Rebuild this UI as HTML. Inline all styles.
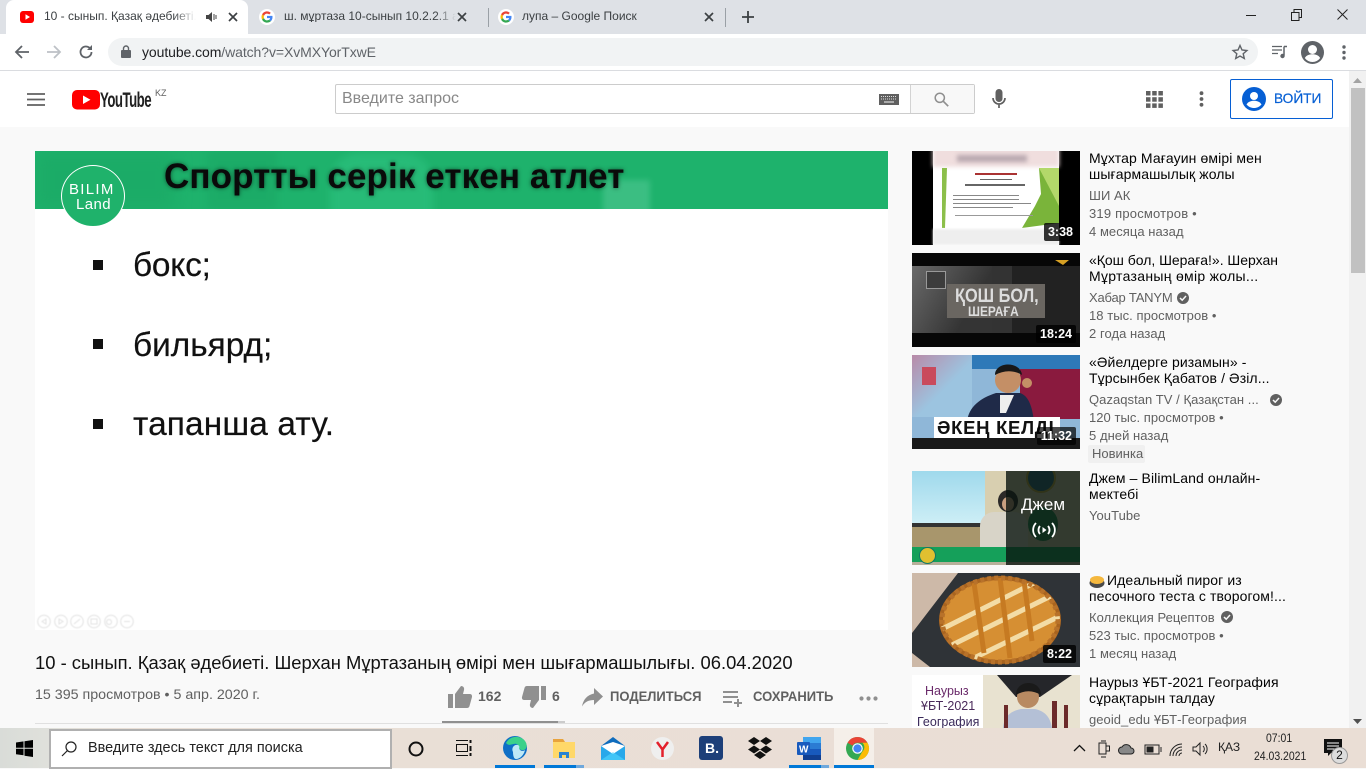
<!DOCTYPE html>
<html lang="ru"><head><meta charset="utf-8"><title>10 - сынып. Қазақ әдебиеті</title>
<style>
html,body{margin:0;padding:0;width:1366px;height:768px;overflow:hidden;background:#f9f9f9;font-family:"Liberation Sans","Noto Sans CJK SC",sans-serif}
.a{position:absolute}
.t{position:absolute;white-space:nowrap;line-height:1}
svg{position:absolute;overflow:visible}
.tt{font-size:14px;color:#030303;left:1089px;letter-spacing:.1px}
.m{font-size:13px;color:#606060;left:1089px;letter-spacing:.05px}
.d{position:absolute;background:rgba(0,0,0,.8);color:#fff;font-size:12.5px;font-weight:bold;line-height:18px;height:18px;padding:0 4px;border-radius:2px;white-space:nowrap}
.th{position:absolute;left:912px;width:168px;height:94px;overflow:hidden}
.blur{filter:blur(.6px)}
</style></head><body>

<!-- tab strip -->
<div class="a" style="left:0;top:0;width:1366px;height:34px;background:#dee1e6"></div>
<div class="a" style="left:6px;top:0;width:242px;height:34px;background:#fff;border-radius:8px 8px 0 0"></div>
<svg style="left:20px;top:9px" width="16" height="16"><rect x="0" y="2" width="14" height="12" rx="3" fill="#f00"/><path d="M5.500 5.300v5.400l4.500-2.700z" fill="#fff"/></svg>
<div class="t" style="left:44px;top:10px;font-size:12px;color:#3c4043;width:152px;overflow:hidden;-webkit-mask-image:linear-gradient(90deg,#000 85%,transparent)">10 - сынып. Қазақ әдебиеті.</div>
<svg style="left:206px;top:10px" width="12" height="14"><path d="M0 5h2.500L6 2v10L2.500 9H0z" fill="#444"/><path d="M8 4v6M10 5v4" stroke="#666" stroke-width="1.200"/></svg>
<svg style="left:228px;top:12px" width="10" height="10"><path d="M1 1l8 8M9 1l-8 8" stroke="#3c4043" stroke-width="1.700"/></svg>
<!-- G icons -->
<svg style="left:259px;top:9px" width="16" height="16" viewBox="0 0 16 16"><circle cx="8" cy="8" r="8" fill="#fff"/><path d="M8 4.600c1 0 1.700.4 2.200.9l1.600-1.600C10.800 3 9.500 2.400 8 2.400 5.800 2.400 4 3.600 3.100 5.400l1.900 1.500C5.400 5.600 6.600 4.600 8 4.600z" fill="#ea4335"/><path d="M13.500 8.100c0-.5 0-.8-.1-1.200H8v2.200h3.100c-.1.700-.5 1.300-1.100 1.700l1.800 1.400c1.100-1 1.700-2.400 1.700-4.100z" fill="#4285f4"/><path d="M5 9.100c-.1-.3-.2-.7-.2-1.100s.1-.8.2-1.100L3.100 5.400C2.700 6.200 2.500 7.100 2.500 8s.2 1.800.6 2.600z" fill="#fbbc05"/><path d="M8 13.600c1.500 0 2.800-.5 3.800-1.400L10 10.800c-.5.300-1.200.6-2 .6-1.400 0-2.600-1-3-2.300l-1.900 1.500C4 12.400 5.800 13.600 8 13.600z" fill="#34a853"/></svg>
<div class="t" style="left:284px;top:10px;font-size:12px;color:#3c4043;width:172px;overflow:hidden;-webkit-mask-image:linear-gradient(90deg,#000 88%,transparent)">ш. мұртаза 10-сынып 10.2.2.1 ав</div>
<svg style="left:457px;top:12px" width="10" height="10"><path d="M1 1l8 8M9 1l-8 8" stroke="#3c4043" stroke-width="1.700"/></svg>
<div class="a" style="left:488px;top:8px;width:1px;height:19px;background:#9aa0a6"></div>
<svg style="left:498px;top:9px" width="16" height="16" viewBox="0 0 16 16"><circle cx="8" cy="8" r="8" fill="#fff"/><path d="M8 4.600c1 0 1.700.4 2.200.9l1.600-1.600C10.800 3 9.500 2.400 8 2.400 5.800 2.400 4 3.600 3.100 5.400l1.900 1.500C5.400 5.600 6.600 4.600 8 4.600z" fill="#ea4335"/><path d="M13.500 8.100c0-.5 0-.8-.1-1.200H8v2.200h3.100c-.1.700-.5 1.300-1.100 1.700l1.800 1.400c1.100-1 1.700-2.400 1.700-4.100z" fill="#4285f4"/><path d="M5 9.100c-.1-.3-.2-.7-.2-1.100s.1-.8.2-1.100L3.100 5.400C2.700 6.200 2.500 7.100 2.500 8s.2 1.800.6 2.600z" fill="#fbbc05"/><path d="M8 13.600c1.500 0 2.800-.5 3.800-1.400L10 10.800c-.5.300-1.200.6-2 .6-1.400 0-2.600-1-3-2.300l-1.900 1.500C4 12.400 5.800 13.600 8 13.600z" fill="#34a853"/></svg>
<div class="t" style="left:522px;top:10px;font-size:12px;color:#3c4043">лупа – Google Поиск</div>
<svg style="left:704px;top:12px" width="10" height="10"><path d="M1 1l8 8M9 1l-8 8" stroke="#3c4043" stroke-width="1.700"/></svg>
<div class="a" style="left:725px;top:8px;width:1px;height:19px;background:#9aa0a6"></div>
<svg style="left:741px;top:10px" width="14" height="14"><path d="M7 1v12M1 7h12" stroke="#3c4043" stroke-width="1.800"/></svg>
<!-- window controls -->
<div class="a" style="left:1246px;top:15px;width:10px;height:1px;background:#222"></div>
<svg style="left:1291px;top:9px" width="12" height="12"><path d="M.5 3.500h7.500v8H.5zM3 3.500V.5h7.500v8H8" fill="none" stroke="#222"/></svg>
<svg style="left:1337px;top:9px" width="12" height="12"><path d="M.5.5l10 10M10.500.5l-10 10" stroke="#222"/></svg>

<!-- toolbar -->
<div class="a" style="left:0;top:34px;width:1366px;height:36px;background:#fff"></div>
<div class="a" style="left:0;top:70px;width:1366px;height:1px;background:#dadce0"></div>
<svg style="left:14px;top:44px" width="16" height="16"><path d="M15 8H2M8 2L2 8l6 6" fill="none" stroke="#5f6368" stroke-width="1.800"/></svg>
<svg style="left:46px;top:44px" width="16" height="16"><path d="M1 8h13M8 2l6 6-6 6" fill="none" stroke="#bdc1c6" stroke-width="1.800"/></svg>
<svg style="left:78px;top:44px" width="16" height="16"><path d="M13.500 8a5.500 5.500 0 1 1-1.700-4" fill="none" stroke="#5f6368" stroke-width="1.800"/><path d="M14 1v5H9z" fill="#5f6368"/></svg>
<div class="a" style="left:108px;top:38px;width:1150px;height:28px;background:#f1f3f4;border-radius:14px"></div>
<svg style="left:121px;top:45px" width="10" height="13"><rect x="0" y="5" width="10" height="8" rx="1" fill="#5f6368"/><path d="M2.500 5V3.500a2.500 2.500 0 0 1 5 0V5" fill="none" stroke="#5f6368" stroke-width="1.400"/></svg>
<div class="t" style="left:142px;top:45px;font-size:14px;color:#202124;letter-spacing:-.08px">youtube.com<span style="color:#5f6368">/watch?v=XvMXYorTxwE</span></div>
<svg style="left:1232px;top:44px" width="16" height="16" viewBox="0 0 16 16"><path d="M8 1.500l2 4.500 4.900.5-3.700 3.200 1.100 4.800L8 12l-4.300 2.500 1.100-4.800L1.100 6.500 6 6z" fill="none" stroke="#5f6368" stroke-width="1.400"/></svg>
<svg style="left:1272px;top:45px" width="16" height="14"><path d="M0 1.500h10M0 5h10M0 8.500h6" stroke="#5f6368" stroke-width="1.300"/><path d="M12 1.500h3M12 1.500v9" stroke="#5f6368" stroke-width="1.500" fill="none"/><circle cx="10.500" cy="11" r="2.200" fill="#5f6368"/></svg>
<svg style="left:1301px;top:41px" width="23" height="23" viewBox="0 0 23 23"><circle cx="11.500" cy="11.500" r="11.500" fill="#5f6368"/><circle cx="11.500" cy="8.500" r="4.500" fill="#fff"/><path d="M3.800 17c1.500-2.800 4.500-3.800 7.700-3.800s6.200 1 7.700 3.800c-2 2.600-4.700 4-7.700 4s-5.700-1.400-7.700-4z" fill="#fff"/></svg>
<svg style="left:1342px;top:45px" width="4" height="16"><circle cx="2" cy="2" r="1.700" fill="#5f6368"/><circle cx="2" cy="7.500" r="1.700" fill="#5f6368"/><circle cx="2" cy="13" r="1.700" fill="#5f6368"/></svg>

<!-- YT header -->
<div class="a" style="left:0;top:71px;width:1349px;height:56px;background:#fff"></div>
<svg style="left:27px;top:93px" width="18" height="13"><path d="M0 1h18M0 6.500h18M0 12h18" stroke="#606060" stroke-width="1.800"/></svg>
<svg style="left:72px;top:90px" width="28" height="20"><rect width="28" height="19.500" rx="5" fill="#f00"/><path d="M11 5.500v8.500l7.500-4.250z" fill="#fff"/></svg>
<div class="t" style="left:100px;top:90px;font-size:21px;color:#212121;letter-spacing:-.8px;transform:scaleX(.63);transform-origin:0 0;font-weight:bold">YouTube</div>
<div class="t" style="left:155px;top:89px;font-size:9px;color:#606060">KZ</div>
<div class="a" style="left:335px;top:84px;border:1px solid #ccc;background:#fff;border-radius:2px;height:28px;width:638px"></div>
<div class="a" style="left:910px;top:85px;width:63px;height:28px;background:#f8f8f8;border-left:1px solid #d3d3d3"></div>
<div class="t" style="left:342px;top:91px;font-size:16px;color:#888">Введите запрос</div>
<svg style="left:879px;top:94px" width="20" height="11"><rect width="20" height="11" fill="#606060"/><path d="M2 2.500h16M2 5h16" stroke="#ddd" stroke-dasharray="1 1"/><path d="M5 8h10" stroke="#ddd" stroke-width="1.200"/></svg>
<svg style="left:934px;top:92px" width="15" height="15"><circle cx="5.800" cy="5.800" r="4.600" fill="none" stroke="#8f8f8f" stroke-width="1.500"/><path d="M9.200 9.200l5 5" stroke="#8f8f8f" stroke-width="1.700"/></svg>
<svg style="left:992px;top:89px" width="14" height="20"><rect x="3.500" y="0" width="7" height="13" rx="3.500" fill="#606060"/><path d="M1 9a6 6 0 0 0 12 0M7 15v4" fill="none" stroke="#606060" stroke-width="1.700"/></svg>
<svg style="left:1146px;top:91px" width="17" height="17" fill="#606060"><rect width="4.500" height="4.500"/><rect x="6.200" width="4.500" height="4.500"/><rect x="12.400" width="4.500" height="4.500"/><rect y="6.200" width="4.500" height="4.500"/><rect x="6.200" y="6.200" width="4.500" height="4.500"/><rect x="12.400" y="6.200" width="4.500" height="4.500"/><rect y="12.400" width="4.500" height="4.500"/><rect x="6.200" y="12.400" width="4.500" height="4.500"/><rect x="12.400" y="12.400" width="4.500" height="4.500"/></svg>
<svg style="left:1199px;top:91px" width="5" height="16" fill="#606060"><circle cx="2.500" cy="2.200" r="1.900"/><circle cx="2.500" cy="8" r="1.900"/><circle cx="2.500" cy="13.800" r="1.900"/></svg>
<div class="a" style="left:1230px;top:79px;width:101px;height:38px;border:1px solid #065fd4;border-radius:2px"></div>
<svg style="left:1242px;top:87px" width="24" height="24" viewBox="0 0 24 24"><circle cx="12" cy="12" r="12" fill="#065fd4"/><circle cx="12" cy="9" r="4" fill="#fff"/><path d="M4.500 17.500c1.500-2.800 4.500-3.800 7.500-3.800s6 1 7.500 3.800c-2 2.300-4.600 3.500-7.500 3.500s-5.500-1.200-7.500-3.500z" fill="#fff"/></svg>
<div class="t" style="left:1274px;top:92px;font-size:13.700px;color:#065fd4;-webkit-text-stroke:.2px #065fd4">ВОЙТИ</div>

<!-- player -->
<div class="a" style="left:35px;top:151px;width:853px;height:479px;background:#fff"></div>
<div class="a" style="left:35px;top:151px;width:853px;height:58px;background:#1eb26c;overflow:hidden">
  <div class="a" style="left:0;top:0;width:140px;height:58px;background:#1aa864;filter:blur(8px);opacity:.6"></div>
  <div class="a" style="left:173px;top:0;width:68px;height:58px;background:#1aa563;filter:blur(4px);opacity:.5"></div>
  <div class="a" style="left:295px;top:2px;width:103px;height:70px;background:#2bc07d;border-radius:30px 30px 0 0;filter:blur(4px);opacity:.7"></div>
  <div class="a" style="left:568px;top:29px;width:47px;height:40px;background:#4fc792;filter:blur(3px);opacity:.6"></div>
</div>
<div class="a" style="left:61px;top:165px;width:64px;height:62px;border-radius:50%;background:#1fb26b;border:1px solid #fff;box-sizing:border-box"></div>
<div class="t" style="left:69px;top:182px;font-size:15px;color:#fff;letter-spacing:1.300px">BILIM</div>
<div class="t" style="left:76px;top:197px;font-size:15px;color:#fff;letter-spacing:.4px">Land</div>
<div class="t" style="left:164px;top:159px;font-size:35px;font-weight:bold;color:#0a0a0a;text-shadow:0 0 4px rgba(0,0,0,.55);letter-spacing:.1px">Спортты серік еткен атлет</div>
<div class="a" style="left:93px;top:260px;width:10px;height:10px;background:#111"></div>
<div class="a" style="left:93px;top:339px;width:10px;height:10px;background:#111"></div>
<div class="a" style="left:93px;top:419px;width:10px;height:10px;background:#111"></div>
<div class="t" style="left:133px;top:249px;font-size:33.400px;color:#111;letter-spacing:-.2px;-webkit-text-stroke:.2px #111;filter:blur(.3px)">бокс;</div>
<div class="t" style="left:133px;top:329px;font-size:33.400px;color:#111;-webkit-text-stroke:.2px #111;filter:blur(.3px)">бильярд;</div>
<div class="t" style="left:133px;top:408px;font-size:33.400px;color:#111;letter-spacing:.15px;-webkit-text-stroke:.2px #111;filter:blur(.3px)">тапанша ату.</div>
<svg style="left:36px;top:614px;filter:blur(.4px)" width="100" height="15" fill="none" stroke="#e2e2e2"><circle cx="8" cy="7.500" r="6.300"/><circle cx="25" cy="7.500" r="6.300"/><circle cx="41" cy="7.500" r="6.300"/><circle cx="58" cy="7.500" r="6.300"/><circle cx="75" cy="7.500" r="6.300"/><circle cx="91" cy="7.500" r="6.300"/><path d="M10 5l-4 2.500 4 2.500zM23 5l4 2.500-4 2.500zM38 10l6-5M55 5h6v5h-6zM73 5.500a2.500 2.500 0 1 0 .1 0M88 7.500h6"/></svg>

<!-- title and actions -->
<div class="t" style="left:35px;top:654px;font-size:18.400px;color:#111">10 - сынып. Қазақ әдебиеті. Шерхан Мұртазаның өмірі мен шығармашылығы. 06.04.2020</div>
<div class="t" style="left:35px;top:688px;font-size:14.250px;color:#606060">15 395 просмотров • 5 апр. 2020 г.</div>
<svg style="left:448px;top:686px" width="24" height="22" fill="#909090"><path d="M0 8h5v14H0zM7 8l6-8c2.500 0 3.500 2 3 4l-1 4h7c1.500 0 2.300 1.500 2 3l-2.500 9c-.3 1.200-1.200 2-2.500 2H7z"/></svg>
<div class="t" style="left:478px;top:689px;font-size:14px;color:#606060;font-weight:bold">162</div>
<svg style="left:522px;top:686px" width="24" height="22" fill="#909090"><path d="M19 0h5v14h-5zM17 14l-6 8c-2.500 0-3.500-2-3-4l1-4H2c-1.500 0-2.300-1.500-2-3l2.500-9C2.800.8 3.700 0 5 0h12z"/></svg>
<div class="t" style="left:552px;top:689px;font-size:14px;color:#606060;font-weight:bold">6</div>
<svg style="left:582px;top:688px" width="21" height="19" fill="#909090"><path d="M12 0l9 8.500-9 8.500v-5c-5 0-9 1.500-12 6.500 1-6.500 5-11.500 12-13z"/></svg>
<div class="t" style="left:610px;top:689px;font-size:14px;color:#606060;font-weight:bold;transform:scaleX(.93);transform-origin:0 0">ПОДЕЛИТЬСЯ</div>
<svg style="left:723px;top:689px" width="22" height="18"><path d="M0 3h15M0 8h15M0 13h9M15 10v8M11 14h8" stroke="#909090" stroke-width="2"/></svg>
<div class="t" style="left:753px;top:689px;font-size:14px;color:#606060;font-weight:bold;transform:scaleX(.93);transform-origin:0 0">СОХРАНИТЬ</div>
<svg style="left:859px;top:696px" width="19" height="5" fill="#909090"><circle cx="2.500" cy="2.500" r="2.100"/><circle cx="9.500" cy="2.500" r="2.100"/><circle cx="16.500" cy="2.500" r="2.100"/></svg>
<div class="a" style="left:35px;top:723px;width:853px;height:1px;background:#e0e0e0"></div>
<div class="a" style="left:442px;top:721px;width:123px;height:2px;background:#ccc"></div>
<div class="a" style="left:442px;top:721px;width:116px;height:2px;background:#909090"></div>

<!-- sidebar thumbs -->
<div class="th" style="top:151px;background:#000">
  <div class="a" style="left:21px;top:0;width:126px;height:94px;background:#fff"></div>
  <div class="a" style="left:21px;top:-4px;width:126px;height:20px;background:#f0dede;filter:blur(2px)"></div>
  <div class="a" style="left:45px;top:4px;width:70px;height:7px;background:#b9a9b0;filter:blur(2px)"></div>
  <svg style="left:0;top:0;filter:blur(.3px)" width="168" height="94"><path d="M30 17h5l-2 60h-3z" fill="#8cbf4a"/><path d="M127 17h20v55l-37 5 13-22 6-12z" fill="#7ab43a"/><path d="M127 17h20v38z" fill="#b3d86a"/></svg>
  <div class="a" style="left:63px;top:22px;width:42px;height:2px;background:#a33"></div>
  <div class="a" style="left:68px;top:28px;width:32px;height:1px;background:#666"></div>
  <div class="a" style="left:53px;top:33px;width:60px;height:1.500px;background:#666"></div>
  <div class="a" style="left:41px;top:44px;width:66px;height:1px;background:#888"></div>
  <div class="a" style="left:41px;top:48px;width:66px;height:1px;background:#888"></div>
  <div class="a" style="left:41px;top:52px;width:78px;height:1px;background:#888"></div>
  <div class="a" style="left:41px;top:56px;width:60px;height:1px;background:#888"></div>
  <div class="a" style="left:43px;top:64px;width:78px;height:1px;background:#999"></div>
  <div class="a" style="left:21px;top:78px;width:126px;height:16px;background:#eee;filter:blur(1px)"></div>
  <div class="d" style="right:3px;bottom:4px">3:38</div>
</div>
<div class="th" style="top:253px;background:#333">
  <div class="a" style="left:0;top:0;width:168px;height:13px;background:#070707"></div>
  <div class="a" style="left:0;top:80px;width:168px;height:14px;background:#070707"></div>
  <div class="a" style="left:0;top:13px;width:80px;height:67px;background:linear-gradient(120deg,#6a6a6a,#343434 70%)"></div>
  <div class="a" style="left:100px;top:13px;width:68px;height:67px;background:#222"></div>
  <div class="a" style="left:35px;top:31px;width:98px;height:34px;background:#6a6661"></div>
  <div class="a" style="left:14px;top:18px;width:18px;height:16px;border:1px solid #999;background:#3c3c3c"></div>
  <div class="t" style="left:43px;top:34px;font-size:19px;color:#ddd;font-weight:bold;transform:scaleX(.86);transform-origin:0 0">ҚОШ БОЛ,</div>
  <div class="t" style="left:56px;top:51px;font-size:14px;color:#ddd;font-weight:bold;transform:scaleX(.85);transform-origin:0 0">ШЕРАҒА</div>
  <svg style="left:143px;top:6px" width="14" height="6"><path d="M0 1h14L8 6z" fill="#d6a024"/></svg>
  <div class="d" style="right:4px;bottom:4px">18:24</div>
</div>
<div class="th" style="top:355px;background:#8fb7d8">
  <div class="a" style="left:0;top:0;width:168px;height:14px;background:#2e79b8"></div>
  <div class="a" style="left:0;top:0;width:60px;height:62px;background:linear-gradient(135deg,#b98aa8,#9cc4e0 55%)"></div>
  <div class="a" style="left:10px;top:12px;width:14px;height:18px;background:#c94a5c"></div>
  <div class="a" style="left:108px;top:14px;width:60px;height:50px;background:#8a1a3e"></div>
  <svg style="left:0;top:0" width="168" height="94"><path d="M55 66c2-14 13-23 29-28h24c9 3 12 14 14 28z" fill="#1f2a48"/><circle cx="96" cy="25" r="13" fill="#c48f66"/><path d="M83 20c0-14 26-14 27 0-8-5-18-5-27 0z" fill="#181818"/><path d="M88 40h14l-8 18h-6z" fill="#eee"/><circle cx="115" cy="28" r="5" fill="#c48f66"/></svg>
  <div class="a" style="left:0;top:83px;width:168px;height:11px;background:#1a1a1a"></div>
  <div class="a" style="left:22px;top:62px;width:126px;height:21px;background:#fff"></div>
  <div class="t" style="left:25px;top:64px;font-size:18.500px;font-weight:bold;color:#111;letter-spacing:.7px">ӘКЕҢ КЕЛДІ</div>
  <div class="d" style="right:4px;bottom:4px;background:rgba(0,0,0,.7)">11:32</div>
</div>
<div class="th" style="top:471px;background:#d8cfb0">
  <div class="a" style="left:0;top:0;width:73px;height:52px;background:linear-gradient(180deg,#9fd9ec,#cdeef6)"></div>
  <div class="a" style="left:0;top:52px;width:73px;height:4px;background:#333"></div>
  <div class="a" style="left:0;top:56px;width:94px;height:20px;background:#a8966c"></div>
  <div class="a" style="left:68px;top:41px;width:48px;height:40px;background:#d8d4c8;border-radius:14px 14px 0 0"></div>
  <div class="a" style="left:86px;top:19px;width:20px;height:22px;background:#2c2a28;border-radius:50%"></div>
  <div class="a" style="left:90px;top:26px;width:12px;height:14px;background:#c9a080;border-radius:50%"></div>
  <div class="a" style="left:0;top:76px;width:168px;height:15px;background:#15a05a"></div>
  <div class="a" style="left:0;top:91px;width:168px;height:3px;background:#b7b09a"></div>
  <div class="a" style="left:7px;top:76px;width:15px;height:15px;background:#e0c030;border-radius:50%;border:1px solid #176"></div>
  <div class="a" style="left:116px;top:36px;width:30px;height:34px;background:#1f8a50;border-radius:50%"></div>
  <div class="a" style="left:114px;top:-8px;width:30px;height:30px;background:#2a6a80;border:2px solid #c9b040;border-radius:50%;box-sizing:border-box"></div>
  <div class="a" style="left:94px;top:0;width:74px;height:94px;background:rgba(10,20,15,.8)"></div>
  <div class="t" style="left:109px;top:25px;font-size:17px;color:#fff">Джем</div>
  <svg style="left:120px;top:50px" width="24" height="18" fill="none" stroke="#fff" stroke-width="1.800"><path d="M4 2a10 10 0 0 0 0 14M8 5a6 6 0 0 0 0 8M20 2a10 10 0 0 1 0 14M16 5a6 6 0 0 1 0 8"/><path d="M10.500 6v6l4-3z" fill="#fff" stroke="none"/></svg>
</div>
<div class="th" style="top:573px;background:#2f3337">
  <svg style="left:0;top:0" width="168" height="94"><defs><clipPath id="pie"><ellipse cx="88" cy="47" rx="60" ry="43"/></clipPath></defs><path d="M0 0h46L0 60zM0 80l18 14H0z" fill="#cdb9a8"/><ellipse cx="88" cy="47" rx="61" ry="44" fill="#a9641f"/><ellipse cx="88" cy="47" rx="57" ry="40" fill="#d68f33"/><g clip-path="url(#pie)"><g stroke="#f3dca6" stroke-width="5"><path d="M30 56L130 6M40 72L145 20M60 86L150 42"/></g><g stroke="#c67a22" stroke-width="5"><path d="M62 10l10 70M88 5l10 80M112 8l8 60"/></g></g><ellipse cx="88" cy="47" rx="58" ry="42" fill="none" stroke="#b8722a" stroke-width="5" stroke-dasharray="4 3"/></svg>
  <div class="d" style="right:4px;bottom:4px">8:22</div>
</div>
<div class="th" style="top:675px;height:53px;background:#fff">
  <div class="a" style="left:71px;top:0;width:97px;height:53px;background:#e8e2d0"></div>
  <svg style="left:0;top:0" width="168" height="53"><path d="M85 0h75l-32 22h-24z" fill="#25262a"/><path d="M91 53c1-12 8-17 18-19h14c9 2 15 7 17 19z" fill="#b4c0d6"/><circle cx="116" cy="22" r="11" fill="#b88a62"/><path d="M104 20c0-16 25-16 25 0-8-5-17-5-25 0z" fill="#1a1a1a"/><path d="M92 30h4v23h-4zM140 26h5v27h-5zM152 30h4v23h-4z" fill="#6b2a2a"/></svg>
  <div class="t" style="left:13px;top:10px;font-size:12.500px;color:#6a2a6a">Наурыз</div>
  <div class="t" style="left:9px;top:25px;font-size:12.500px;color:#4a2a5a">ҰБТ-2021</div>
  <div class="t" style="left:5px;top:41px;font-size:12.500px;color:#3a2a5a">География</div>
</div>

<!-- sidebar text -->
<div class="t tt" style="top:151px">Мұхтар Мағауин өмірі мен</div>
<div class="t tt" style="top:167px">шығармашылық жолы</div>
<div class="t m" style="top:189px">ШИ АК</div>
<div class="t m" style="top:207px;letter-spacing:.2px">319 просмотров •</div>
<div class="t m" style="top:225px">4 месяца назад</div>

<div class="t tt" style="top:253px;letter-spacing:-.02px">«Қош бол, Шераға!». Шерхан</div>
<div class="t tt" style="top:269px;letter-spacing:.3px">Мұртазаның өмір жолы...</div>
<div class="t m" style="top:291px;letter-spacing:-.2px">Хабар TANYM</div>
<svg style="left:1177px;top:292px" width="12" height="12" viewBox="0 0 12 12"><circle cx="6" cy="6" r="6" fill="#606060"/><path d="M3 6l2.200 2.200L9 4" fill="none" stroke="#f9f9f9" stroke-width="1.500"/></svg>
<div class="t m" style="top:309px">18 тыс. просмотров •</div>
<div class="t m" style="top:327px">2 года назад</div>

<div class="t tt" style="top:355px">«Әйелдерге ризамын» -</div>
<div class="t tt" style="top:371px">Тұрсынбек Қабатов / Әзіл...</div>
<div class="t m" style="top:393px">Qazaqstan TV / Қазақстан ...</div>
<svg style="left:1270px;top:394px" width="12" height="12" viewBox="0 0 12 12"><circle cx="6" cy="6" r="6" fill="#606060"/><path d="M3 6l2.200 2.200L9 4" fill="none" stroke="#f9f9f9" stroke-width="1.500"/></svg>
<div class="t m" style="top:411px">120 тыс. просмотров •</div>
<div class="t m" style="top:429px">5 дней назад</div>
<div class="a" style="left:1088px;top:445px;width:57px;height:18px;background:#f0f0f0;border-radius:2px"></div>
<div class="t" style="left:1092px;top:447px;font-size:13px;color:#606060">Новинка</div>

<div class="t tt" style="top:471px">Джем – BilimLand онлайн-</div>
<div class="t tt" style="top:487px">мектебі</div>
<div class="t m" style="top:509px">YouTube</div>

<svg style="left:1089px;top:573px" width="16" height="15"><ellipse cx="8" cy="10" rx="7.500" ry="5" fill="#4a4a4a"/><ellipse cx="8" cy="7" rx="7" ry="4" fill="#f5b83e"/></svg>
<div class="t tt" style="left:1107px;top:573px">Идеальный пирог из</div>
<div class="t tt" style="top:589px">песочного теста с творогом!...</div>
<div class="t m" style="top:611px">Коллекция Рецептов</div>
<svg style="left:1221px;top:611px" width="12" height="12" viewBox="0 0 12 12"><circle cx="6" cy="6" r="6" fill="#606060"/><path d="M3 6l2.200 2.200L9 4" fill="none" stroke="#f9f9f9" stroke-width="1.500"/></svg>
<div class="t m" style="top:629px">523 тыс. просмотров •</div>
<div class="t m" style="top:647px">1 месяц назад</div>

<div class="t tt" style="top:675px">Наурыз ҰБТ-2021 География</div>
<div class="t tt" style="top:691px">сұрақтарын талдау</div>
<div class="t m" style="top:713px">geoid_edu ҰБТ-География</div>

<!-- scrollbar -->
<div class="a" style="left:1349px;top:71px;width:17px;height:657px;background:#f1f1f1"></div>
<div class="a" style="left:1351px;top:88px;width:14px;height:185px;background:#c1c1c1"></div>
<svg style="left:1353px;top:78px" width="9" height="5"><path d="M0 5h9L4.500 0z" fill="#a3a3a3"/></svg>
<svg style="left:1353px;top:719px" width="9" height="5"><path d="M0 0h9L4.500 5z" fill="#505050"/></svg>

<!-- taskbar -->
<div class="a" style="left:0;top:728px;width:1366px;height:40px;background:linear-gradient(90deg,#d9dcd8 0,#dfe0db 45px,#e9dfd6 130px,#eaded5 100%)"></div>
<svg style="left:16px;top:740px" width="17" height="17" fill="#000"><path d="M0 2.500L7.500 1.400v6.400H0zM8.500 1.300L17 0v7.800H8.500zM0 8.800h7.500v6.400L0 14.200zM8.500 8.800H17V17l-8.500-1.300z"/></svg>
<div class="a" style="left:49px;top:729px;background:#fff;border:2px solid #b0b0b0;width:339px;height:36px"></div>
<svg style="left:61px;top:741px" width="16" height="16" fill="none" stroke="#222" stroke-width="1.200"><circle cx="10" cy="6" r="5"/><path d="M6.500 9.500L1 15"/></svg>
<div class="t" style="left:88px;top:741px;font-size:14.450px;color:#222">Введите здесь текст для поиска</div>
<svg style="left:408px;top:741px" width="16" height="16"><circle cx="8" cy="8" r="6.500" fill="none" stroke="#111" stroke-width="2"/></svg>
<svg style="left:456px;top:740px" width="16" height="16" fill="none" stroke="#111"><path d="M0 .5h12M0 15.500h12M.5 4.500h11v7H.5z"/><path d="M14.500 0v3M14.500 6v5M14.500 13v3" stroke-width="2"/></svg>
<svg style="left:503px;top:736px" width="24" height="24" viewBox="0 0 24 24"><circle cx="12" cy="12" r="12" fill="#0f6fc6"/><path d="M3 7C6 1 14-1 20 3c4 3 4.500 8 2.500 10-2 2-6 1-7-1 1-3-2-5-5-4-3 .5-5 2-7.500-1z" fill="#3bd18a"/><path d="M10 16c-2-4 1-8 5-7 1 .5 2 2 1 3 1 4 5 3 6 2-1 5-5 9-9 9-2 0-3-3-3-7z" fill="#bfe9f7"/></svg>
<div class="a" style="left:495px;top:765px;width:40px;height:3px;background:#0078d7"></div>
<svg style="left:553px;top:739px" width="22" height="19"><path d="M0 0h10l2 3h10v16H0z" fill="#ffd869"/><path d="M0 0h10l2 3H0z" fill="#e8a33d"/><path d="M6 19v-6h10v6h-3v-3h-4v3z" fill="#2a83d3"/></svg>
<div class="a" style="left:544px;top:765px;width:40px;height:3px;background:#0078d7"></div>
<div class="a" style="left:576px;top:765px;width:8px;height:3px;background:#6fa8dc"></div>
<svg style="left:601px;top:737px" width="24" height="23"><path d="M12 0l12 9v14H0V9z" fill="#0f6cbd"/><path d="M0 9h24v14H0z" fill="#28a8ea"/><path d="M0 9l12 8 12-8-12-4z" fill="#fff"/><path d="M0 23l12-8 12 8z" fill="#50d9ff" opacity=".6"/></svg>
<svg style="left:651px;top:737px" width="23" height="23"><circle cx="11.500" cy="11.500" r="11.500" fill="#efefef"/><path d="M6 5l5.500 7.500V20M17 5l-5.500 7.500" fill="none" stroke="#e3202c" stroke-width="2.500"/></svg>
<div class="a" style="left:699px;top:736px;width:24px;height:24px;background:#1d3f79;border-radius:3px"></div>
<div class="t" style="left:705px;top:741px;font-size:14px;font-weight:bold;color:#fff">B.</div>
<svg style="left:748px;top:737px" width="24" height="22" fill="#111"><path d="M6 0l6 4-6 4-6-4zM18 0l6 4-6 4-6-4zM6 8.500l6 4-6 4-6-4zM18 8.500l6 4-6 4-6-4zM12 14l6 4-6 4-6-4z"/></svg>
<svg style="left:797px;top:737px" width="24" height="23"><rect x="6" y="0" width="18" height="23" rx="1" fill="#2b7cd3"/><rect x="6" y="0" width="18" height="6" fill="#41a5ee"/><rect x="6" y="12" width="18" height="6" fill="#185abd"/><rect x="6" y="18" width="18" height="5" fill="#103f91"/><rect x="0" y="5" width="13" height="13" rx="1" fill="#185abd"/><text x="2" y="15.500" font-size="10" font-weight="bold" fill="#fff" font-family="Liberation Sans">W</text></svg>
<div class="a" style="left:789px;top:765px;width:40px;height:3px;background:#0078d7"></div>
<div class="a" style="left:821px;top:765px;width:8px;height:3px;background:#6fa8dc"></div>
<div class="a" style="left:834px;top:728px;width:40px;height:37px;background:#f5efe9"></div>
<div class="a" style="left:834px;top:765px;width:40px;height:3px;background:#0078d7"></div>
<svg style="left:846px;top:737px" width="23" height="23" viewBox="0 0 24 24"><circle cx="12" cy="12" r="12" fill="#34a853"/><path d="M12 0a12 12 0 0 1 10.400 6H12a6 6 0 0 0-5.200 3L1.600 6A12 12 0 0 1 12 0z" fill="#ea4335"/><path d="M22.400 6A12 12 0 0 1 12 24l5.200-9a6 6 0 0 0-.2-9z" fill="#fbbc05"/><circle cx="12" cy="12" r="5.500" fill="#fff"/><circle cx="12" cy="12" r="4.300" fill="#4285f4"/></svg>
<!-- tray -->
<svg style="left:1073px;top:744px" width="13" height="8"><path d="M1 7l5.500-5.500L12 7" fill="none" stroke="#111" stroke-width="1.300"/></svg>
<svg style="left:1098px;top:741px" width="13" height="18" fill="none" stroke="#222"><path d="M1 2h7v11H1zM8 5h3.500v5H8M3 0h5M3 16h5"/></svg>
<svg style="left:1118px;top:743px" width="17" height="12"><path d="M4 11a3.500 3.500 0 0 1 0-7 5 5 0 0 1 9 1 3 3 0 0 1 0 6z" fill="#888" stroke="#222"/></svg>
<svg style="left:1144px;top:743px" width="18" height="12" fill="none" stroke="#222"><rect x="1" y="2" width="14" height="9"/><rect x="3" y="4" width="6" height="5" fill="#222"/><path d="M17 4v5"/></svg>
<svg style="left:1169px;top:743px" width="17" height="14" fill="none" stroke="#222"><path d="M1 13A12 12 0 0 1 13 1M4 13a9 9 0 0 1 9-9M7 13a6 6 0 0 1 6-6M10 13a3 3 0 0 1 3-3"/></svg>
<svg style="left:1192px;top:742px" width="17" height="14" fill="none" stroke="#222"><path d="M1 5h3l4-4v12l-4-4H1zM11 4a4 4 0 0 1 0 6M13 2a7 7 0 0 1 0 10"/></svg>
<div class="t" style="left:1218px;top:741px;font-size:12px;color:#222">ҚАЗ</div>
<div class="t" style="left:1266px;top:732px;font-size:12px;color:#222;transform:scaleX(.87);transform-origin:0 0">07:01</div>
<div class="t" style="left:1254px;top:750px;font-size:12px;color:#222;transform:scaleX(.87);transform-origin:0 0">24.03.2021</div>
<svg style="left:1324px;top:739px" width="18" height="18"><path d="M0 0h18v14H7l-3 3v-3H0z" fill="#111"/><path d="M3 4h12M3 7h12M3 10h9" stroke="#fff"/></svg>
<div class="a" style="left:1331px;top:747px;width:17px;height:17px;border-radius:50%;background:#ddd;border:1px solid #999;box-sizing:border-box;font-size:12px;line-height:15px;text-align:center;color:#111">2</div>
</body></html>
